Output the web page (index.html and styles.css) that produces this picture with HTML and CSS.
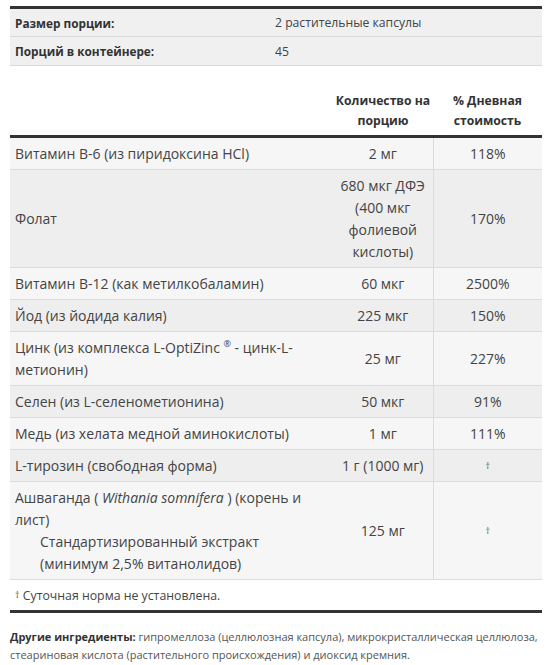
FILE: index.html
```html
<!DOCTYPE html>
<html lang="ru">
<head>
<meta charset="utf-8">
<link rel="stylesheet" href="styles.css">
</head>
<body>
<div class="panel">
  <table class="serving">
    <tr><th>Размер порции:</th><td>2 растительные капсулы</td></tr>
    <tr><th>Порций в контейнере:</th><td>45</td></tr>
  </table>

  <table class="facts">
    <colgroup><col class="c-name"><col class="c-amt"><col class="c-dv"></colgroup>
    <thead>
      <tr><th></th><th class="amt">Количество на<br>порцию</th><th class="dv">% Дневная<br>стоимость</th></tr>
    </thead>
    <tbody>
      <tr class="lt"><td>Витамин B-6 (из пиридоксина HCl)</td><td class="amt">2 мг</td><td class="dv">118%</td></tr>
      <tr class="dk"><td>Фолат</td><td class="amt">680 мкг ДФЭ<br>(400 мкг<br>фолиевой<br>кислоты)</td><td class="dv">170%</td></tr>
      <tr class="lt"><td>Витамин B-12 (как метилкобаламин)</td><td class="amt">60 мкг</td><td class="dv">2500%</td></tr>
      <tr class="dk"><td>Йод (из йодида калия)</td><td class="amt">225 мкг</td><td class="dv">150%</td></tr>
      <tr class="lt"><td>Цинк (из комплекса L-OptiZinc <sup>®</sup> - цинк-L-<br>метионин)</td><td class="amt">25 мг</td><td class="dv">227%</td></tr>
      <tr class="dk"><td>Селен (из L-селенометионина)</td><td class="amt">50 мкг</td><td class="dv">91%</td></tr>
      <tr class="lt"><td>Медь (из хелата медной аминокислоты)</td><td class="amt">1 мг</td><td class="dv">111%</td></tr>
      <tr class="dk"><td>L-тирозин (свободная форма)</td><td class="amt">1 г (1000 мг)</td><td class="dv dag">†</td></tr>
      <tr class="lt"><td>Ашваганда ( <i>Withania somnifera</i> ) (корень и<br>лист)<div class="sub">Стандартизированный экстракт<br>(минимум 2,5% витанолидов)</div></td><td class="amt">125 мг</td><td class="dv dag">†</td></tr>
      <tr class="foot"><td colspan="3"><span class="fdag">†</span> Суточная норма не установлена.</td></tr>
    </tbody>
  </table>

  <p class="other"><b>Другие ингредиенты:</b> гипромеллоза (целлюлозная капсула), микрокристаллическая целлюлоза,<br>стеариновая кислота (растительного происхождения) и диоксид кремния.</p>
</div>
</body>
</html>
```
FILE: styles.css
```css
* { box-sizing: border-box; }
body {
  margin: 0;
  background: #fff;
  font-family: "Open Sans", "Noto Sans", sans-serif;
  color: #444;
}
.panel {
  padding: 6px 8px 0 10px;
}
table {
  width: 532px;
  border-collapse: collapse;
}
.serving {
  border-top: 3px solid #333;
  font-size: 12.2px;
}
.serving th, .serving td {
  background: #f0f0f0;
  border-bottom: 1px solid #d9d9d9;
  height: 29px;
  padding: 0 5px;
  text-align: left;
  vertical-align: middle;
  white-space: nowrap;
}
.serving th {
  width: 260px;
  font-weight: 700;
  font-size: 11.8px;
  color: #333;
}
.serving td { color: #444; }

.facts {
  margin-top: 21px;
  table-layout: fixed;
  font-size: 14px;
}
.c-name { width: 323px; }
.c-amt { width: 100px; }
.c-dv { width: 109px; }
.facts thead th {
  font-weight: 700;
  color: #333;
  line-height: 20px;
  padding: 4px 0;
  text-align: center;
  border-bottom: 3px solid #333;
  font-size: 12.2px;
  white-space: nowrap;
}
.facts tbody td {
  line-height: 22px;
  padding: 5px 5px 4px;
  border-bottom: 1px solid #dcdcdc;
  vertical-align: middle;
}
.facts tr.lt td { background: #f6f6f6; }
.facts tr.dk td { background: #eeeeee; }
.facts td.amt { text-align: center; white-space: nowrap; padding-left: 2px; padding-right: 2px; }
.facts td.dv { text-align: center; border-left: 1px solid #dcdcdc; }
.facts td.dag { font-size: 9px; color: #555; }
.facts sup { font-size: 9px; line-height: 0; }
.sub { padding-left: 25px; }
.facts tr.foot td {
  background: #fff;
  font-size: 12.3px;
  height: 32px;
  padding: 0 5px;
  border-bottom: 3px solid #333;
}
.fdag { font-size: 9px; vertical-align: 2px; }
.other {
  margin: 15px 0 0 0;
  font-size: 11px;
  line-height: 18px;
  color: #555;
  white-space: nowrap;
}
.other b { color: #333; }
```
